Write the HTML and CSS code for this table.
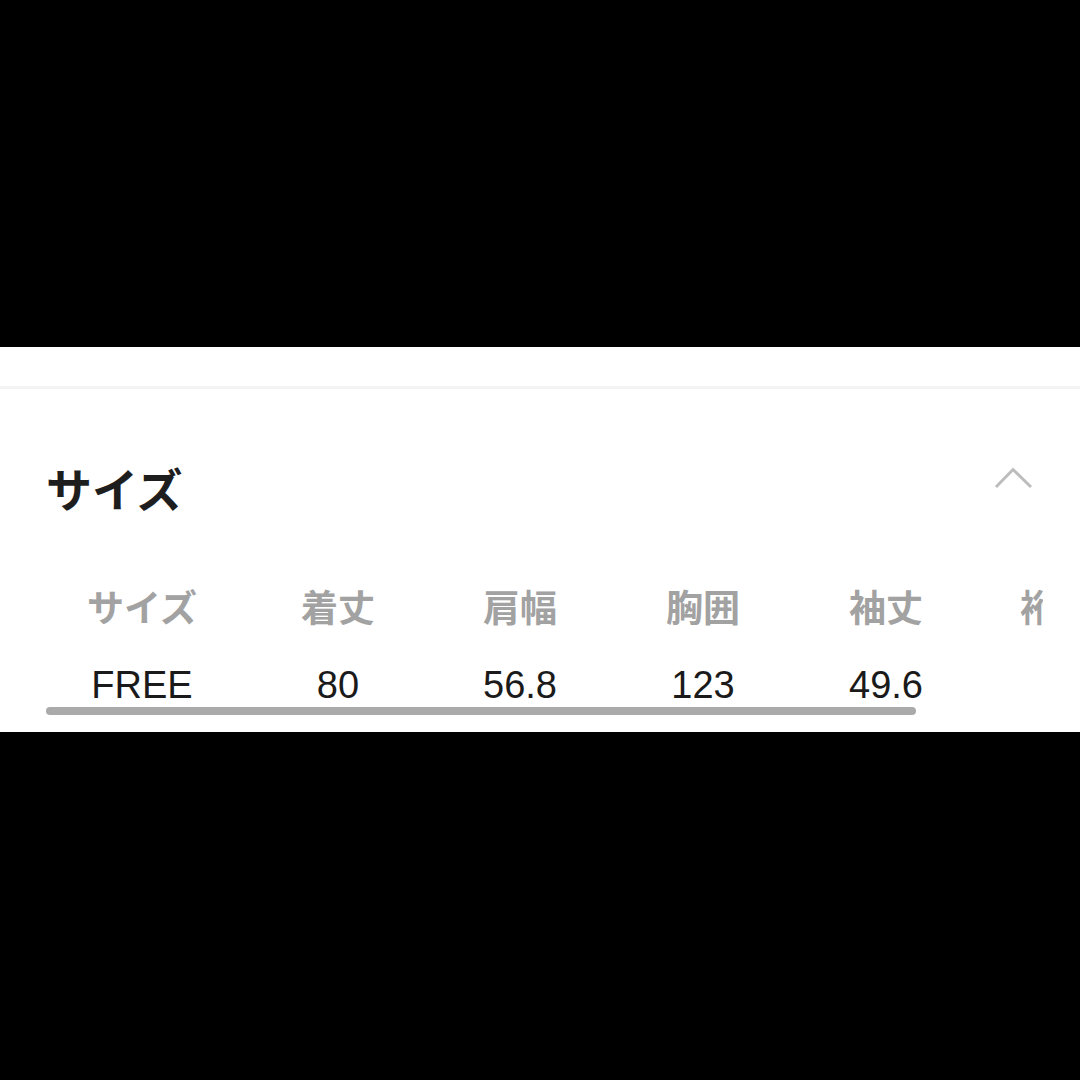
FILE: index.html
```html
<!DOCTYPE html>
<html lang="ja">
<head>
<meta charset="utf-8">
<title>サイズ</title>
<link rel="stylesheet" href="styles.css">
</head>
<body>
<div class="page">
  <div class="band"></div>
  <section class="panel">
    <div class="topstrip"></div>
    <div class="divider"></div>
    <div class="head">
      <h2 class="title">サイズ</h2>
      <svg class="chevron" width="39" height="22" viewBox="0 0 39 22">
        <polyline points="2,20 19,2.5 37,20" fill="none" stroke="#bdbdbd" stroke-width="3"/>
      </svg>
    </div>
    <div class="scroll">
      <div class="table">
        <div class="th">サイズ</div>
        <div class="th">着丈</div>
        <div class="th">肩幅</div>
        <div class="th">胸囲</div>
        <div class="th">袖丈</div>
        <div class="th">裄丈</div>
        <div class="td">FREE</div>
        <div class="td">80</div>
        <div class="td">56.8</div>
        <div class="td">123</div>
        <div class="td">49.6</div>
        <div class="td"></div>
      </div>
      <div class="thumb"></div>
    </div>
  </section>
  <div class="band"></div>
</div>
</body>
</html>
```

FILE: styles.css
```css
html, body {
  margin: 0;
  padding: 0;
  background: #000;
}

.page {
  width: 1080px;
  height: 1080px;
  display: flex;
  flex-direction: column;
  background: #000;
}

.band {
  height: 347px;
  flex: none;
  background: #000;
}

.band:last-child {
  flex: 1;
}

.panel {
  height: 385px;
  flex: none;
  background: #fff;
  display: flex;
  flex-direction: column;
  overflow: hidden;
}

.topstrip {
  height: 39px;
}

.divider {
  height: 3px;
  background: #f3f3f3;
}

.head {
  margin-top: 65px;
  padding: 0 47px 0 46px;
  display: flex;
  justify-content: space-between;
  align-items: flex-start;
}

.title {
  margin: 0;
  font-family: "Noto Sans CJK JP", "Noto Sans", sans-serif;
  font-weight: 700;
  font-size: 46px;
  line-height: 67px;
  color: #1e1e1e;
}

.chevron {
  display: block;
  margin-top: 13px;
}

.scroll {
  margin: 58px 37px 0 46px;
  overflow: hidden;
}

.table {
  display: grid;
  grid-template-columns: 192px 200px 164px 202px 164px 178px;
  row-gap: 30px;
  width: max-content;
}

.th {
  text-align: center;
  font-family: "Noto Sans CJK JP", "Noto Sans", sans-serif;
  font-weight: 700;
  font-size: 37px;
  line-height: 54px;
  color: #a2a2a2;
  white-space: nowrap;
}

.td {
  text-align: center;
  font-family: "Liberation Sans", "Noto Sans CJK JP", sans-serif;
  font-size: 38px;
  line-height: 44px;
  color: #1a1a1a;
  white-space: nowrap;
}

.thumb {
  width: 870px;
  height: 8px;
  border-radius: 4px;
  background: #aaaaaa;
}
```
